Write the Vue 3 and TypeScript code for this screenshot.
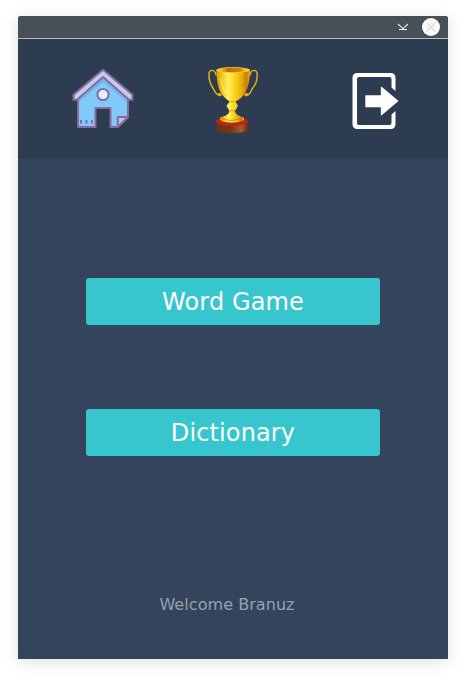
<script setup lang="ts">
import { ref } from 'vue'

interface MenuItem {
  id: string
  label: string
}

const user = ref<string>('Branuz')
const items: MenuItem[] = [
  { id: 'game', label: 'Word Game' },
  { id: 'dictionary', label: 'Dictionary' },
]
</script>

<template>
  <main class="window">
    <div class="titlebar">
      <button class="control minimize" aria-label="Minimize">
        <svg width="12" height="8" viewBox="0 0 12 8">
          <path d="M1 1L6 5.6L11 1" fill="none" stroke="#e8eaea" stroke-width="1.1" />
          <path d="M2 6.5H10" stroke="#fff" stroke-width="1" />
        </svg>
      </button>
      <button class="control close" aria-label="Close">
        <svg width="18" height="18" viewBox="0 0 18 18">
          <circle cx="9" cy="9" r="9" fill="#fcfcfc" />
          <path d="M4.5 4.5L13.5 13.5M13.5 4.5L4.5 13.5" stroke="#dcdcda" stroke-width="1.2" />
          <path d="M9 5L13 9L9 13L5 9Z" fill="none" stroke="#e8e8e6" stroke-width=".8" />
        </svg>
      </button>
    </div>

    <header class="toolbar">
      <button class="tool home" aria-label="Home">
        <svg width="76" height="76" viewBox="0 0 76 76" stroke="#876a9f" stroke-width="2" stroke-linejoin="round">
          <path d="M13 37L38 16L63 37V57L53 67H45.5V48H30.5V67H13Z" fill="#80c9f8" />
          <path d="M14 38L38 18L62 38V42L38 22L14 42Z" fill="#74b5e6" stroke="none" />
          <path d="M38 9.7L67.5 34.8V39.8H64L38 17L12 39.8H8.5V34.8Z" fill="#c5cbea" />
          <circle cx="38" cy="34.5" r="5.6" fill="#e1f1ff" />
          <path d="M52.8 67V57H63Z" fill="#b5c9ee" />
          <path d="M16 60V63.5M21.5 60V63.5M27 60V63.5" stroke-width="2" />
        </svg>
      </button>

      <button class="tool trophy" aria-label="Trophies">
        <svg width="66" height="80" viewBox="0 0 66 80">
          <defs>
            <linearGradient id="gold" x1="0" x2="1">
              <stop offset="0" stop-color="#d99a05" />
              <stop offset=".18" stop-color="#f6c90f" />
              <stop offset=".35" stop-color="#fff06a" />
              <stop offset=".5" stop-color="#ffdc25" />
              <stop offset=".75" stop-color="#eaae09" />
              <stop offset=".9" stop-color="#c87c05" />
              <stop offset="1" stop-color="#efb511" />
            </linearGradient>
            <linearGradient id="rim" x1="0" x2="1">
              <stop offset="0" stop-color="#ffd83a" />
              <stop offset=".35" stop-color="#bd6a08" />
              <stop offset=".75" stop-color="#d88a0b" />
              <stop offset="1" stop-color="#ffe052" />
            </linearGradient>
            <linearGradient id="wood" x1="0" x2="1">
              <stop offset="0" stop-color="#713015" />
              <stop offset=".45" stop-color="#743714" />
              <stop offset=".8" stop-color="#b2581d" />
              <stop offset="1" stop-color="#71290d" />
            </linearGradient>
          </defs>
          <g fill="none" stroke="#e7b719" stroke-width="1.4" stroke-linecap="round">
            <path d="M16 15C15 9 9 9 9 14C8.5 22 11 25 13.5 29C15 32 16 35 19.5 35.5C22 36 21 33 18.5 34" />
            <path d="M50 15C51 9 57.2 9 57.2 14C57.5 22 55 25 52 29C50.5 32 50 35 46.5 35.5C44 36 45 33 47.5 34" />
          </g>
          <path d="M16.2 61V69C18 74.5 46 74.5 47.9 69V61Z" fill="url(#wood)" />
          <ellipse cx="32" cy="61.5" rx="15.9" ry="4.5" fill="#b52618" />
          <path d="M29.5 50H35C35 54 37 55.5 44 57.5V60C39 63.5 24 63.5 20 60V57.5C27 55.5 29.5 54 29.5 50Z" fill="url(#gold)" />
          <path d="M20.5 58Q32 63 43 57.5" fill="none" stroke="#c47b08" stroke-width=".8" />
          <path d="M16.3 10C16.8 25 19.5 34 27 39.5L29.5 41.5L26.5 46L29.5 51H35L38 46L35.5 41.5L39 39.5C47 34 49.8 24 50 10Z" fill="url(#gold)" />
          <path d="M29.5 41.8H35.5M30 50.7H35" stroke="#c98a08" stroke-width=".8" />
          <ellipse cx="33.1" cy="10" rx="16.9" ry="3" fill="#f7ca23" />
          <ellipse cx="33.1" cy="10" rx="15" ry="2.2" fill="url(#rim)" />
          <path d="M21 18C21.5 25 23.5 30 27 34" fill="none" stroke="#fff7a0" stroke-width="1.2" opacity=".7" />
        </svg>
      </button>

      <button class="tool exit" aria-label="Exit">
        <svg width="70" height="72" viewBox="0 0 70 72">
          <path d="M55.5 27L51.5 23.5V15Q51.5 13 49.5 13H19Q17 13 17 15V59Q17 61 19 61H49.5Q51.5 61 51.5 59V50.5L55.5 47V60Q55.5 65 50.5 65H17.5Q12.5 65 12.5 60V14Q12.5 9 17.5 9H50.5Q55.5 9 55.5 14Z" fill="#fff" />
          <path d="M26 32H41.5V23.5L57.5 37L41.5 50.5V42.5H26Z" fill="#fff" stroke="#fff" stroke-width="1.4" stroke-linejoin="round" />
        </svg>
      </button>
    </header>

    <nav class="menu">
      <button v-for="item in items" :key="item.id" class="menu-button">{{ item.label }}</button>
    </nav>
    <p class="welcome">Welcome {{ user }}</p>
  </main>
</template>

<style>
body {
  background: #fff;
}
</style>

<style scoped>
.window {
  box-sizing: border-box;
  display: flex;
  flex-direction: column;
  width: 430px;
  height: 643px;
  margin: 16px 18px 20px;
  overflow: hidden;
  border-radius: 3px 3px 0 0;
  background: #34445d;
  box-shadow: 0 3px 16px rgba(0, 0, 0, 0.13);
  font-family: "DejaVu Sans", sans-serif;
}

button {
  margin: 0;
  padding: 0;
  border: 0;
  background: none;
  font: inherit;
}

svg {
  display: block;
}

.titlebar {
  display: flex;
  flex: none;
  align-items: center;
  justify-content: flex-end;
  gap: 13px;
  height: 22px;
  padding-right: 8px;
  border-bottom: 1px solid #b6bcbc;
  background: #475057;
}

.toolbar {
  display: flex;
  flex: none;
  align-items: flex-start;
  box-sizing: border-box;
  height: 120px;
  padding: 21px 38px 0 47px;
  background: #2e3c52;
}

.trophy {
  margin-left: 59px;
}

.exit {
  margin-left: auto;
  padding-top: 4px;
}

.menu {
  display: flex;
  flex-direction: column;
  gap: 84px;
  padding: 119px 68px 0;
}

.menu-button {
  box-sizing: border-box;
  height: 47px;
  padding-top: 2px;
  border-radius: 3px;
  background: #37c6cd;
  color: #fff;
  font-size: 24px;
  line-height: 45px;
  letter-spacing: 0.12px;
}

.welcome {
  margin: 139px 12px 0 0;
  color: #98a0ac;
  font-size: 16px;
  line-height: 19px;
  letter-spacing: 0.06px;
  text-align: center;
}
</style>
